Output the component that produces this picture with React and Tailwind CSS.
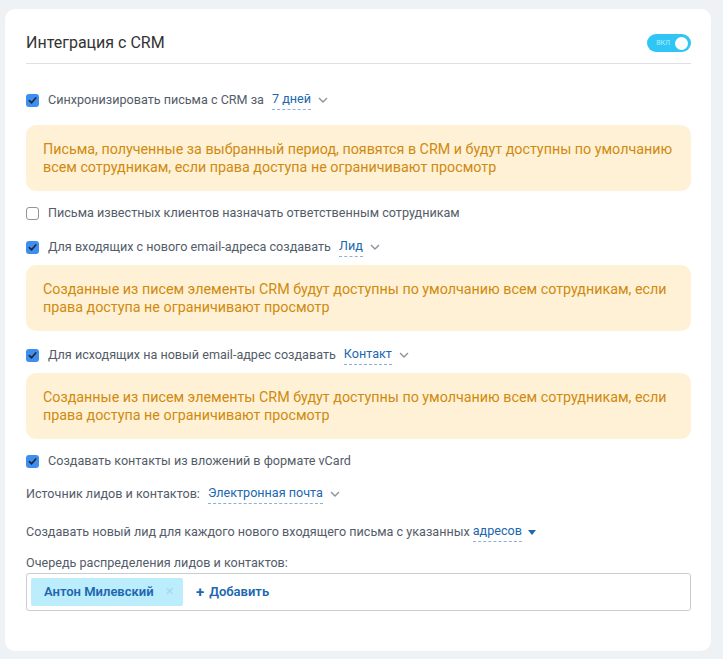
import React from 'react';

const Check = ({ checked }) => (
  <span
    className={`flex h-[13px] w-[13px] shrink-0 items-center justify-center rounded-[3px] ${
      checked ? 'bg-[#3e8ef2]' : 'border border-[#8f959c] bg-white'
    }`}
  >
    {checked && (
      <svg width="9" height="9" viewBox="0 0 10 10">
        <path d="M1.5 5.2 L4 7.6 L8.6 2.2" fill="none" stroke="#1d2630" strokeWidth="1.8" strokeLinecap="round" strokeLinejoin="round" />
      </svg>
    )}
  </span>
);

const Chevron = () => (
  <svg width="10" height="6" viewBox="0 0 10 6" className="ml-[7px]">
    <path d="M1 1 L5 5 L9 1" fill="none" stroke="#8b939b" strokeWidth="1.4" />
  </svg>
);

const Select = ({ children }) => (
  <span className="ml-[8px] inline-flex items-center">
    <span className="border-b border-dashed border-[#8cb1d6] pb-[1px] leading-[18px] text-[#2067b0]">{children}</span>
    <Chevron />
  </span>
);

const Row = ({ checked, children, className = '' }) => (
  <div className={`flex items-center ${className}`}>
    <Check checked={checked} />
    <span className="ml-[9px] flex items-center">{children}</span>
  </div>
);

const Notice = ({ children, className = '' }) => (
  <div className={`rounded-[10px] bg-[#fff1d6] px-[17px] py-[15px] text-[14.3px] leading-[18px] text-[#cf8a0e] ${className}`}>
    {children}
  </div>
);

export default function App() {
  return (
    <div className="min-h-[659px] bg-[#eef2f4] pt-[9px] pl-[5px] pr-[12px] pb-[8px] font-['Roboto',sans-serif]">
      <div className="h-[642px] rounded-[10px] bg-white pl-[21px] pr-[20px] pt-[22px] text-[12.6px] leading-[18px] text-[#535c69]">
        {/* Заголовок */}
        <div className="flex items-center justify-between border-b border-[#dfe0e3] pb-[8px]">
          <span className="text-[16px] leading-[24px] text-[#333]">Интеграция с CRM</span>
          <span className="flex h-[18px] w-[44px] items-center justify-end rounded-full bg-[#2fc6f6] pr-[3px]">
            <span className="mr-[5px] text-[7px] leading-none text-[#b8ecfc]">ВКЛ</span>
            <span className="h-[13px] w-[13px] rounded-full bg-white" />
          </span>
        </div>

        <Row checked className="mt-[26px]">
          Синхронизировать письма с CRM за
          <Select>7 дней</Select>
        </Row>

        <Notice className="mt-[15px]">
          Письма, полученные за выбранный период, появятся в CRM и будут доступны по умолчанию
          <br />
          всем сотрудникам, если права доступа не ограничивают просмотр
        </Notice>

        <Row className="mt-[13px]">Письма известных клиентов назначать ответственным сотрудникам</Row>

        <Row checked className="mt-[15px]">
          Для входящих с нового email-адреса создавать
          <Select>Лид</Select>
        </Row>

        <Notice className="mt-[8px]">
          Созданные из писем элементы CRM будут доступны по умолчанию всем сотрудникам, если
          <br />
          права доступа не ограничивают просмотр
        </Notice>

        <Row checked className="mt-[14px]">
          Для исходящих на новый email-адрес создавать
          <Select>Контакт</Select>
        </Row>

        <Notice className="mt-[8px]">
          Созданные из писем элементы CRM будут доступны по умолчанию всем сотрудникам, если
          <br />
          права доступа не ограничивают просмотр
        </Notice>

        <Row checked className="mt-[13px]">Создавать контакты из вложений в формате vCard</Row>

        <div className="mt-[14px] flex items-center">
          Источник лидов и контактов:
          <Select>Электронная почта</Select>
        </div>

        <div className="mt-[18px] flex items-center">
          Создавать новый лид для каждого нового входящего письма с указанных
          <span className="ml-[3px] inline-flex items-center">
            <span className="border-b border-dashed border-[#8cb1d6] pb-[1px] leading-[18px] text-[#2067b0]">адресов</span>
            <svg width="8" height="5" viewBox="0 0 8 5" className="ml-[6px]">
              <path d="M0 0 H8 L4 5 Z" fill="#2067b0" />
            </svg>
          </span>
        </div>

        <div className="mt-[12px]">Очередь распределения лидов и контактов:</div>

        <div className="mt-[1px] flex h-[38px] items-center rounded-[3px] border border-[#c6cdd3] pl-[4px] text-[13px]">
          <span className="flex h-[28px] w-[152px] items-center rounded-[2px] bg-[#bcedfc] pl-[13px] pr-[9px]">
            <span className="font-semibold text-[#2067b0]">Антон Милевский</span>
            <span className="ml-auto text-[11px] text-[#9fd9ec]">✕</span>
          </span>
          <span className="ml-[13px] flex items-center font-semibold text-[#2067b0]">
            <span className="mr-[5px] text-[15px] font-bold leading-none">+</span>
            Добавить
          </span>
        </div>
      </div>
    </div>
  );
}
